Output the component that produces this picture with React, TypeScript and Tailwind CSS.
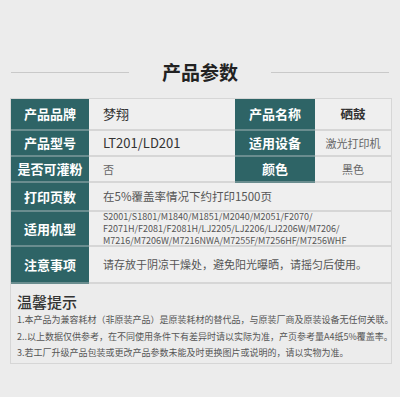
import React from 'react';

const FONT = { fontFamily: '"Noto Sans CJK SC", "Noto Sans", sans-serif' };

const MODELS = [
  'S2001/S1801/M1840/M1851/M2040/M2051/F2070/',
  'F2071H/F2081/F2081H/LJ2205/LJ2206/LJ2206W/M7206/',
  'M7216/M7206W/M7216NWA/M7255F/M7256HF/M7256WHF',
];

const TIPS = [
  '1.本产品为兼容耗材（非原装产品）是原装耗材的替代品，与原装厂商及原装设备无任何关联。',
  '2..以上数据仅供参考，在不同使用条件下有差异时请以实际为准，产页参考量A4纸5%覆盖率。',
  '3.若工厂升级产品包装或更改产品参数未能及时更换图片或说明的，请以实物为准。',
];

// ── Cells ──────────────────────────────────────────────────────────────────────

const Label: React.FC<{ children: React.ReactNode; w: string }> = ({ children, w }) => (
  <div
    className={`${w} shrink-0 flex items-center justify-center bg-[#2e6466] border-b-2 border-[#6a8d8f] text-white text-[13px] font-bold`}
  >
    {children}
  </div>
);

const Value: React.FC<{ children: React.ReactNode; className?: string }> = ({ children, className = '' }) => (
  <div className={`flex items-center bg-[#efefef] border-b-2 border-[#d6d6d6] ${className}`}>{children}</div>
);

// ── Main ───────────────────────────────────────────────────────────────────────

export default function App() {
  return (
    <div className="w-[400px] h-[397px] bg-[#ececec] overflow-hidden" style={FONT}>
      {/* heading */}
      <div className="pt-[59px] px-[11px] flex items-center">
        <div className="flex-1 h-px bg-[#c9c9c9]" />
        <h1 className="px-[33px] text-[19px] leading-[26px] font-bold text-[#222]">产品参数</h1>
        <div className="flex-1 h-px bg-[#c9c9c9]" />
      </div>

      <div className="mt-[13px] ml-[10px] w-[382px] border border-b-0 border-[#d6d6d6]">
        <div className="flex h-[32px]">
          <Label w="w-[78px]">产品品牌</Label>
          <Value className="w-[146px] pl-[14px] text-[13px] text-[#333]">梦翔</Value>
          <Label w="w-[80px]">产品名称</Label>
          <Value className="flex-1 justify-center text-[12.5px] font-bold text-[#333]">硒鼓</Value>
        </div>
        <div className="flex h-[26px]">
          <Label w="w-[78px]">产品型号</Label>
          <Value className="w-[146px] pl-[14px] text-[13px] text-[#333]">LT201/LD201</Value>
          <Label w="w-[80px]">适用设备</Label>
          <Value className="flex-1 justify-center text-[11px] text-[#666]">激光打印机</Value>
        </div>
        <div className="flex h-[26px]">
          <Label w="w-[78px]">是否可灌粉</Label>
          <Value className="w-[146px] pl-[14px] text-[11px] text-[#666]">否</Value>
          <Label w="w-[80px]">颜色</Label>
          <Value className="flex-1 justify-center text-[11px] text-[#666]">黑色</Value>
        </div>
        <div className="flex h-[29px]">
          <Label w="w-[78px]">打印页数</Label>
          <Value className="flex-1 pl-[14px] text-[11.5px] text-[#555]">在5%覆盖率情况下约打印1500页</Value>
        </div>
        <div className="flex h-[35px]">
          <Label w="w-[78px]">适用机型</Label>
          <Value className="flex-1 pl-[14px] text-[9px] leading-[12px] text-[#555]">
            <div>
              {MODELS.map((m) => (
                <div key={m}>{m}</div>
              ))}
            </div>
          </Value>
        </div>
        <div className="flex h-[37px]">
          <Label w="w-[78px]">注意事项</Label>
          <Value className="flex-1 pl-[14px] text-[11px] text-[#555]">
            请存放于阴凉干燥处，避免阳光曝晒，请摇匀后使用。
          </Value>
        </div>
      </div>

      {/* tips */}
      <div className="ml-[10px] w-[382px] h-[80px] border border-t-0 border-[#d6d6d6] pl-[6px] pt-[8px]">
        <p className="text-[15px] leading-[20px] font-medium text-[#333]">温馨提示</p>
        <div className="text-[9px] leading-[16.5px] text-[#555] whitespace-nowrap">
          {TIPS.map((t) => (
            <div key={t}>{t}</div>
          ))}
        </div>
      </div>
    </div>
  );
}
